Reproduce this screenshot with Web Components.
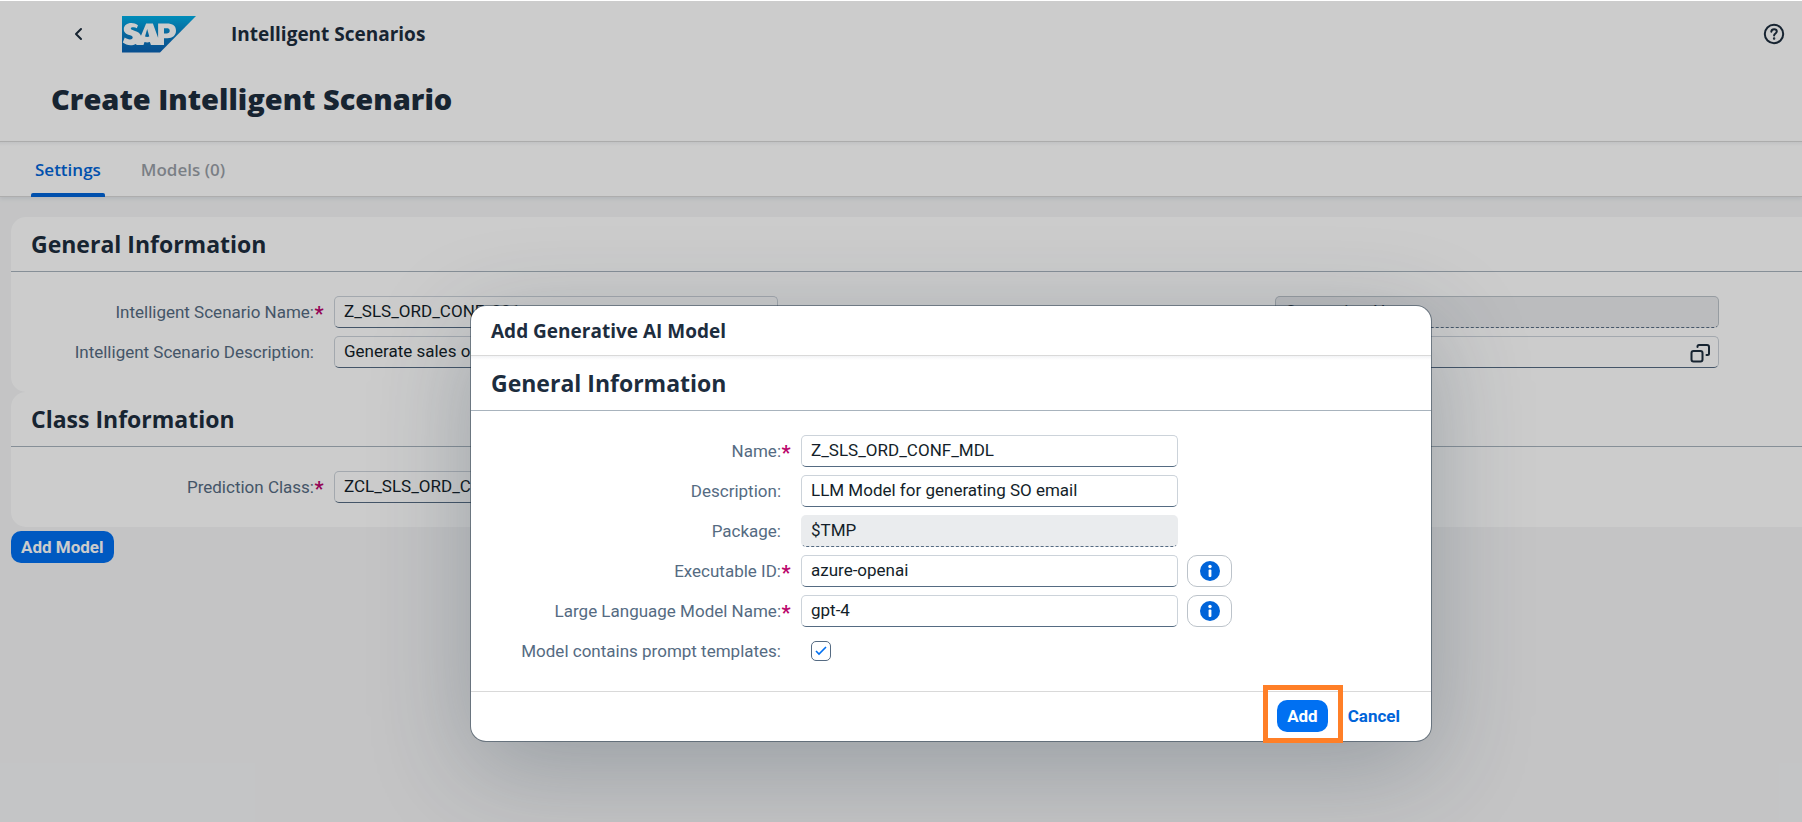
<!DOCTYPE html>
<html lang="en">
<head>
<meta charset="utf-8">
<title>Create Intelligent Scenario</title>
<style>
  html, body { margin: 0; min-height: 100%; }
  body {
    --text: #1d2d3e;
    --label: #556b82;
    --line: #d9d9d9;
    --rule: #a8b3bd;
    --brand: #0070f2;
    --link: #0064d9;
    --body-font: Roboto, "Liberation Sans", sans-serif;
    --head-font: "Open Sans", "Noto Sans", sans-serif;
    background: #f5f6f7;
    color: var(--text);
    font: 17px/24px var(--body-font);
  }
</style>
</head>
<body>
<scenario-app></scenario-app>

<template id="scenario-app">
  <style>
    :host { display: block; position: relative; min-height: 100vh; }
    .fields { display: grid; grid-template-columns: 941fr 850fr; gap: 8px 0; }
    .overlay {
      position: absolute; inset: 1px 0 0 0; background: rgba(0, 0, 0, .2);
      display: flex; justify-content: center; align-items: flex-start;
      padding: 305px 0 0 100px; box-sizing: border-box; overflow: hidden;
    }
    main { padding: 20px 0 0 11px; }
    .actions { padding-top: 4px; }
  </style>
  <shell-bar app="Intelligent Scenarios"></shell-bar>
  <page-title>Create Intelligent Scenario</page-title>
  <tab-strip></tab-strip>
  <main>
    <form-panel heading="General Information">
      <div class="fields">
        <form-field label="Intelligent Scenario Name:" required value="Z_SLS_ORD_CONF_001"></form-field>
        <form-field label="Intelligent Scenario Type:" value="Generative AI" readonly framed></form-field>
        <form-field label="Intelligent Scenario Description:" value="Generate sales order confirmation email"></form-field>
        <form-field label="Package:" value="" help></form-field>
      </div>
    </form-panel>
    <form-panel heading="Class Information">
      <div class="fields">
        <form-field label="Prediction Class:" required value="ZCL_SLS_ORD_CONF"></form-field>
      </div>
    </form-panel>
    <div class="actions"><ui-button kind="primary">Add Model</ui-button></div>
  </main>
  <div class="overlay"><model-dialog></model-dialog></div>
</template>

<template id="shell-bar">
  <style>
    :host { display: flex; align-items: center; height: 68px; padding: 0 17px 0 64px; background: #fff; }
    button { border: 0; background: none; padding: 0; color: inherit; display: flex; }
    .back { width: 28px; justify-content: center; margin-right: 30px; }
    .app { margin-left: 35px; flex: 1; font: 700 19px/24px var(--head-font); }
    svg { display: block; }
  </style>
  <button class="back" aria-label="Back">
    <svg width="12" height="14" viewBox="0 0 12 14" fill="none" stroke="currentColor" stroke-width="2" stroke-linecap="round" stroke-linejoin="round"><path d="M9 2 4 7l5 5"/></svg>
  </button>
  <svg width="74" height="37" viewBox="0 0 74 37" role="img" aria-label="SAP logo">
    <defs><linearGradient id="g" x1="0" y1="0" x2="0" y2="1"><stop offset="0" stop-color="#00b0e8"/><stop offset=".5" stop-color="#0a80c4"/><stop offset="1" stop-color="#0a62b4"/></linearGradient></defs>
    <path fill="url(#g)" d="M0 0h74L38 36.500H0z"/>
    <path fill="#fff" fill-rule="evenodd" d="M16 9.200C14 7.900 11.700 7.100 9.400 7.100 5 7.100 1.800 9.600 1.800 13.200c0 3.400 2.500 4.800 5.600 5.900 2.300.8 3.300 1.200 3.300 2.500 0 1.300-1.100 1.900-2.700 1.900-1.800 0-3.800-.9-5.300-1.900L.8 26.600c2.100 1.600 4.800 2.700 7.700 2.700 2 0 3.900-.5 5.400-1.400L14.700 29h6.800l1-3c1.700.5 3.700.5 5.400 0l1 3H42v-6.800h3.400c5.300 0 8.600-2.800 8.600-7.400 0-5-3.100-7.300-9.400-7.300h-8.500v14.200L30.900 7.500h-6.800l-5.100 12.200c-.7-2.500-3-3.800-6-4.800-2.500-.8-4.200-1.200-4.200-2.300 0-1.200 1.500-1.600 2.800-1.400 1.200.1 2.200.5 3.200 1.100zM25.200 13l2.100 7.600c-1.300.5-3 .5-4.300 0zM42 12.200h2.400c2 0 3.300.6 3.300 2.600s-1.200 2.700-3.200 2.700H42z"/>
  </svg>
  <span class="app"></span>
  <button aria-label="Help">
    <svg width="22" height="22" viewBox="0 0 22 22" fill="none" stroke="currentColor" stroke-width="2" stroke-linecap="round"><circle cx="11" cy="11" r="9.200"/><path d="M8.300 8.700c.2-1.600 1.300-2.400 2.800-2.400s2.700.9 2.700 2.300c0 1.700-2.700 2-2.700 3.800"/><circle cx="11.100" cy="15.600" r=".5" stroke-width="1.500"/></svg>
  </button>
</template>

<template id="page-title">
  <style>
    :host { display: block; background: #fff; padding: 11px 51px 22px; border-bottom: 1px solid var(--line); }
    h1 { margin: 0; font: 800 29px/40px var(--head-font); }
  </style>
  <h1><slot></slot></h1>
</template>

<template id="tab-strip">
  <style>
    :host { display: block; height: 54px; padding: 0 31px; border-bottom: 1px solid var(--line); background: linear-gradient(#f2f3f5, #fff 4px); box-shadow: 0 2px 4px rgba(85, 107, 130, .12); }
    nav { display: flex; gap: 32px; height: 100%; }
    button { border: 0; background: none; padding: 0 4px; font: 600 17px/56px var(--head-font); color: var(--text); height: 55px; position: relative; }
    button[aria-selected=true] { color: var(--link); }
    button[aria-selected=true]::after { content: ""; position: absolute; inset: auto 0 0; height: 4px; background: var(--link); border-radius: 2px 2px 0 0; }
    button:disabled { opacity: .45; }
  </style>
  <nav role="tablist">
    <button role="tab" aria-selected="true">Settings</button>
    <button role="tab" aria-selected="false" disabled>Models (0)</button>
  </nav>
</template>

<template id="form-panel">
  <style>
    :host { display: block; background: #fff; border-radius: 15px 0 0 15px; }
    h2 { margin: 0; padding: 11px 20px; font: 700 23px/32px var(--head-font); border-bottom: 1px solid var(--rule); }
    .body { padding: 24px 0; }
  </style>
  <h2></h2>
  <div class="body"><slot></slot></div>
</template>

<template id="form-field">
  <style>
    :host { display: grid; grid-template-columns: var(--label-col, 314px) var(--input-col, 444px) auto; column-gap: 9px; align-items: center; justify-content: start; height: 32px; }
    label { text-align: right; color: var(--label); line-height: 32px; white-space: nowrap; padding-right: 1px; }
    i { font: 700 20px/20px var(--body-font); color: #ba066c; width: 10px; display: inline-block; text-align: center; vertical-align: -3px; }
    .box { position: relative; display: flex; }
    input[type=text] {
      width: 100%; height: 32px; box-sizing: border-box; padding: 0 9px 2px; font: 17px/24px var(--body-font); color: #131e29;
      background: #fff; border: 1px solid #ccd3da; border-bottom-color: #556b82; border-radius: 5px; margin: 0;
    }
    input[readonly] { background: #eaecee; border-color: #eaecee; border-bottom: 1px dashed #556b82; }
    :host([framed]) input[readonly] { border-color: #bcc3ca #bcc3ca #556b82; }
    .help { position: absolute; right: 9px; top: 7px; }
    input[type=checkbox] { appearance: none; width: 20px; height: 20px; margin: 0 10px; border: 1px solid #556b82; border-radius: 5px; background: #fff; }
    .tick { position: absolute; left: 14px; top: 5px; pointer-events: none; }
    button { width: 45px; height: 32px; padding: 0; background: #fff; border: 1px solid #bcc3ca; border-radius: 10px; display: flex; align-items: center; justify-content: center; }
  </style>
  <label for="in"></label>
  <div class="box"></div>
</template>

<template id="ui-button">
  <style>
    :host { display: inline-block; vertical-align: top; }
    button { height: 32px; border: 1px solid transparent; border-radius: 10px; padding: 0 9px; font: 700 17px/28px var(--body-font); display: block; background: none; color: var(--link); }
    :host([kind=primary]) button { background: var(--brand); color: #fff; }
  </style>
  <button><slot></slot></button>
</template>

<template id="model-dialog">
  <style>
    :host {
      --label-col: 321px; --input-col: 377px;
      display: block; width: 960px; background: #fff; border-radius: 15px; color: var(--text);
      box-shadow: 0 0 0 1px rgba(34, 53, 72, .5), 0 25px 100px rgba(34, 53, 72, .28);
    }
    header { font: 700 19px/24px var(--head-font); padding: 13px 20px 12px; border-bottom: 1px solid var(--line); }
    form-panel { border-radius: 0; background: linear-gradient(#f2f3f5, #fff 4px); }
    .rows { display: grid; gap: 8px; }
    footer { border-top: 1px solid var(--line); height: 47px; display: flex; align-items: center; justify-content: flex-end; gap: 10px; padding: 0 21px 2px 0; }
    .mark { position: relative; display: flex; }
    .mark::after { content: ""; position: absolute; inset: -15px -15px -11px -14px; border: 5px solid #ff7f27; pointer-events: none; }
  </style>
  <header>Add Generative AI Model</header>
  <form-panel heading="General Information">
    <div class="rows">
      <form-field label="Name:" required value="Z_SLS_ORD_CONF_MDL"></form-field>
      <form-field label="Description:" value="LLM Model for generating SO email"></form-field>
      <form-field label="Package:" value="$TMP" readonly></form-field>
      <form-field label="Executable ID:" required value="azure-openai" info></form-field>
      <form-field label="Large Language Model Name:" required value="gpt-4" info></form-field>
      <form-field label="Model contains prompt templates:" check></form-field>
    </div>
  </form-panel>
  <footer>
    <span class="mark"><ui-button kind="primary">Add</ui-button></span>
    <ui-button>Cancel</ui-button>
  </footer>
</template>

<script>
  class Base extends HTMLElement {
    constructor() {
      super();
      const tpl = document.getElementById(this.localName);
      this.attachShadow({ mode: 'open' }).append(tpl.content.cloneNode(true));
    }
    $(selector) { return this.shadowRoot.querySelector(selector); }
  }

  customElements.define('shell-bar', class extends Base {
    connectedCallback() { this.$('.app').textContent = this.getAttribute('app'); }
  });
  customElements.define('page-title', class extends Base {});
  customElements.define('tab-strip', class extends Base {});
  customElements.define('ui-button', class extends Base {});

  customElements.define('form-panel', class extends Base {
    connectedCallback() { this.$('h2').textContent = this.getAttribute('heading'); }
  });

  customElements.define('form-field', class extends Base {
    connectedCallback() {
      const label = this.$('label'), box = this.$('.box');
      label.textContent = this.getAttribute('label');
      const star = document.createElement('i');
      star.textContent = this.hasAttribute('required') ? '*' : '';
      label.append(star);
      const input = document.createElement('input');
      input.id = 'in';
      box.append(input);
      if (this.hasAttribute('check')) {
        input.type = 'checkbox';
        input.checked = true;
        box.insertAdjacentHTML('beforeend', '<svg class="tick" width="12" height="10" viewBox="0 0 12 10" fill="none" stroke="#0070f2" stroke-width="1.600"><path d="M1 5l3 3 7-7"/></svg>');
        return;
      }
      input.type = 'text';
      input.value = this.getAttribute('value');
      input.readOnly = this.hasAttribute('readonly');
      if (this.hasAttribute('help'))
        box.insertAdjacentHTML('beforeend', '<svg class="help" width="20" height="20" viewBox="0 0 20 20" fill="none" stroke="#1d2d3e" stroke-width="2" stroke-linecap="round"><rect x="1.500" y="8" width="11" height="10.500" rx="2"/><path d="M7.500 4V3.500a1.500 1.500 0 0 1 1.500-1.500h8a2 2 0 0 1 2 2v6.500a1.500 1.500 0 0 1-1.500 1.500h-1"/></svg>');
      if (this.hasAttribute('info')) {
        const b = document.createElement('button');
        b.type = 'button';
        b.setAttribute('aria-label', 'More information');
        b.innerHTML = '<svg width="20" height="20" viewBox="0 0 20 20"><circle cx="10" cy="10" r="10" fill="#0064d9"/><circle cx="10" cy="5.500" r="1.700" fill="#fff"/><rect x="8.600" y="8.500" width="2.800" height="7.500" rx="1" fill="#fff"/></svg>';
        this.shadowRoot.append(b);
      }
    }
  });

  customElements.define('model-dialog', class extends Base {
    connectedCallback() {
      this.setAttribute('role', 'dialog');
      this.setAttribute('aria-label', 'Add Generative AI Model');
    }
  });
  customElements.define('scenario-app', class extends Base {});
</script>
</body>
</html>
